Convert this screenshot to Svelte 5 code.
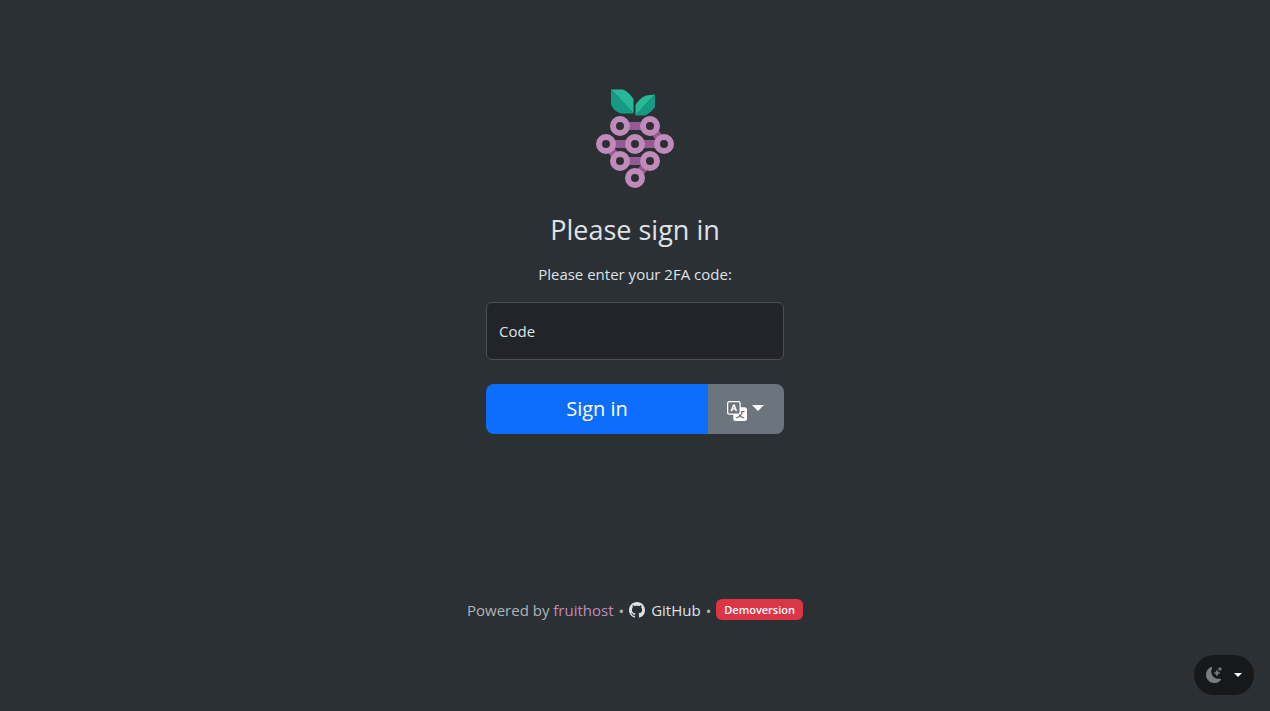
<script>
  let code = $state('');

  const links = ['M620 126H650', 'M606 144H664', 'M620 161H650', 'M650 126L664 144', 'M606 144L620 161', 'M650 161L635 178'];
  const berries = [[620, 126], [650, 126], [606, 144], [635, 144], [664, 144], [620, 161], [650, 161], [635, 178]];
</script>

<main>
  <form onsubmit={(e) => e.preventDefault()}>
    <svg class="logo" viewBox="596 89 78 100" role="img" aria-label="fruithost">
      <path fill="#25b99a" d="M611 89.5H623Q628 91 633.5 99V113.5Z" />
      <path fill="#169b82" d="M611 89.5L633.5 113.5H621Q613 111 611 104Z" />
      <path fill="#25b99a" d="M655 94.5L646 95.5Q639 98.5 635.5 105V115.5Z" />
      <path fill="#169b82" d="M655 94.5V107Q650 113.5 645 115.5H635.5Z" />
      {#each links as d}
        <path {d} stroke="#955a91" stroke-width="8" />
      {/each}
      {#each berries as [cx, cy]}
        <circle {cx} {cy} r="7" fill="#2b3035" stroke="#c08bba" stroke-width="6" />
      {/each}
    </svg>
    <h1>Please sign in</h1>
    <p>Please enter your 2FA code:</p>
    <div class="field">
      <input id="code" type="text" autocomplete="one-time-code" bind:value={code} />
      <label for="code" class:filled={code}>Code</label>
    </div>
    <div class="actions">
      <button class="submit" type="submit">Sign in</button>
      <button class="language" type="button" aria-label="Language">
        <svg viewBox="0 0 16 16" width="20" height="20" fill="currentColor" aria-hidden="true">
          <path d="M4.545 6.714 4.11 8H3l1.862-5h1.284L8 8H6.833l-.435-1.286zm1.634-.736L5.5 3.956h-.049l-.679 2.022z" stroke="currentColor" stroke-width=".3" />
          <path d="M0 2a2 2 0 0 1 2-2h7a2 2 0 0 1 2 2v3h3a2 2 0 0 1 2 2v7a2 2 0 0 1-2 2H7a2 2 0 0 1-2-2v-3H2a2 2 0 0 1-2-2zm2-1a1 1 0 0 0-1 1v7a1 1 0 0 0 1 1h7a1 1 0 0 0 1-1V2a1 1 0 0 0-1-1zm7.138 9.995q.289.451.63.846c-.748.575-1.673 1.001-2.768 1.292.178.217.451.635.555.867 1.125-.359 2.08-.844 2.886-1.494.777.665 1.739 1.165 2.93 1.472.133-.254.414-.673.629-.89-1.125-.253-2.057-.694-2.82-1.284.681-.747 1.222-1.651 1.621-2.757H14V8h-3v1.047h.765c-.318.844-.74 1.546-1.272 2.13a6 6 0 0 1-.415-.492 2 2 0 0 1-.94.31" />
        </svg>
        <span class="caret"></span>
      </button>
    </div>
  </form>
  <footer>
    <span>Powered by <a class="brand" href="#fruithost">fruithost</a></span>
    <span class="dot">•</span>
    <a class="github" href="#github">
      <svg viewBox="0 0 16 16" width="16" height="16" fill="currentColor" aria-hidden="true">
        <path d="M8 0C3.58 0 0 3.58 0 8c0 3.54 2.29 6.53 5.47 7.59.4.07.55-.17.55-.38 0-.19-.01-.82-.01-1.49-2.01.37-2.53-.49-2.69-.94-.09-.23-.48-.94-.82-1.13-.28-.15-.68-.52-.01-.53.63-.01 1.08.58 1.23.82.72 1.21 1.87.87 2.33.66.07-.52.28-.87.51-1.07-1.78-.2-3.64-.89-3.64-3.95 0-.87.31-1.59.82-2.15-.08-.2-.36-1.02.08-2.12 0 0 .67-.21 2.2.82.64-.18 1.32-.27 2-.27s1.36.09 2 .27c1.53-1.04 2.2-.82 2.2-.82.44 1.1.16 1.92.08 2.12.51.56.82 1.27.82 2.15 0 3.07-1.87 3.75-3.65 3.95.29.25.54.73.54 1.48 0 1.07-.01 1.93-.01 2.2 0 .21.15.46.55.38A8.01 8.01 0 0 0 16 8c0-4.42-3.58-8-8-8" />
      </svg>
      GitHub
    </a>
    <span class="dot">•</span>
    <span class="badge">Demoversion</span>
  </footer>
</main>

<button class="theme" type="button" aria-label="Toggle theme">
  <svg viewBox="0 0 16 16" width="16" height="16" fill="currentColor" aria-hidden="true">
    <path d="M6 .278a.77.77 0 0 1 .08.858 7.2 7.2 0 0 0-.878 3.46c0 4.021 3.278 7.277 7.318 7.277q.792-.001 1.533-.16a.79.79 0 0 1 .81.316.73.73 0 0 1-.031.893A8.35 8.35 0 0 1 8.344 16C3.734 16 0 12.286 0 7.71 0 4.266 2.114 1.312 5.124.06A.75.75 0 0 1 6 .278" />
    <path d="M10.794 3.148a.217.217 0 0 1 .412 0l.387 1.162c.173.518.579.924 1.097 1.097l1.162.387a.217.217 0 0 1 0 .412l-1.162.387a1.73 1.73 0 0 0-1.097 1.097l-.387 1.162a.217.217 0 0 1-.412 0l-.387-1.162A1.73 1.73 0 0 0 9.31 6.593l-1.162-.387a.217.217 0 0 1 0-.412l1.162-.387a1.73 1.73 0 0 0 1.097-1.097zM13.863.099a.145.145 0 0 1 .274 0l.258.774c.115.346.386.617.732.732l.774.258a.145.145 0 0 1 0 .274l-.774.258a1.16 1.16 0 0 0-.732.732l-.258.774a.145.145 0 0 1-.274 0l-.258-.774a1.16 1.16 0 0 0-.732-.732l-.774-.258a.145.145 0 0 1 0-.274l.774-.258c.346-.115.617-.386.732-.732z" stroke="currentColor" stroke-width=".4" />
  </svg>
  <span class="caret small"></span>
</button>

<style>
  :global(body) {
    background: #2b3035;
    color: #dee2e6;
    font: 15px/24px "Segoe UI", "Open Sans", "Noto Sans", sans-serif;
  }

  main {
    box-sizing: border-box;
    min-height: 100vh;
    padding: 40px 0;
    display: flex;
    flex-direction: column;
    justify-content: center;
    align-items: center;
  }

  form {
    box-sizing: border-box;
    width: 100%;
    max-width: 330px;
    padding: 0 16px;
    display: flex;
    flex-direction: column;
    text-align: center;
  }

  .logo {
    height: 100px;
    align-self: center;
  }

  h1 {
    margin: 24px 0 16px;
    font-size: 27px;
    font-weight: 400;
    line-height: 33px;
  }

  p {
    margin: 0 0 16px;
  }

  .field {
    position: relative;
  }

  .field input {
    box-sizing: border-box;
    display: block;
    width: 100%;
    height: 58px;
    padding: 24px 12px 8px;
    border: 1px solid #495057;
    border-radius: 6px;
    background: #212529;
    color: inherit;
    font: inherit;
  }

  .field label {
    position: absolute;
    top: 17px;
    left: 13px;
    cursor: text;
  }

  .field label.filled,
  .field input:focus + label {
    top: 4px;
    font-size: 12px;
  }

  .actions {
    display: flex;
    margin-top: 24px;
    border-radius: 8px;
    overflow: hidden;
  }

  button {
    border: 0;
    padding: 0;
    font: inherit;
    color: #fff;
    cursor: pointer;
    display: flex;
    align-items: center;
    justify-content: center;
  }

  .submit {
    flex: 3;
    height: 50px;
    background: #0d6efd;
    font-size: 20px;
  }

  .language {
    flex: 1;
    gap: 5px;
    padding-right: 2px;
    background: #6c757d;
  }

  .language svg {
    margin-top: 4px;
  }

  .language .caret {
    margin-bottom: 2px;
  }

  .caret {
    border: 6px solid transparent;
    border-top-color: currentColor;
    border-bottom: 0;
  }

  .caret.small {
    border-width: 4px 4px 0;
  }

  footer {
    display: flex;
    align-items: center;
    justify-content: center;
    gap: 5px;
    margin-top: 163px;
    color: #b0b4b8;
  }

  a {
    color: #dee2e6;
    text-decoration: none;
  }

  .brand {
    color: #c08bba;
  }

  .dot {
    padding-top: 2px;
    font-size: 15px;
  }

  .github {
    display: flex;
    align-items: center;
    gap: 6px;
  }

  .badge {
    padding: 0 8px;
    border-radius: 6px;
    background: #dc3545;
    color: #fff;
    font-size: 11px;
    font-weight: 600;
    line-height: 21px;
  }

  .theme {
    position: fixed;
    right: 16px;
    bottom: 16px;
    width: 60px;
    height: 40px;
    gap: 12px;
    border-radius: 20px;
    background: #16181a;
  }

  .theme svg {
    color: #7c7d7f;
  }
</style>
